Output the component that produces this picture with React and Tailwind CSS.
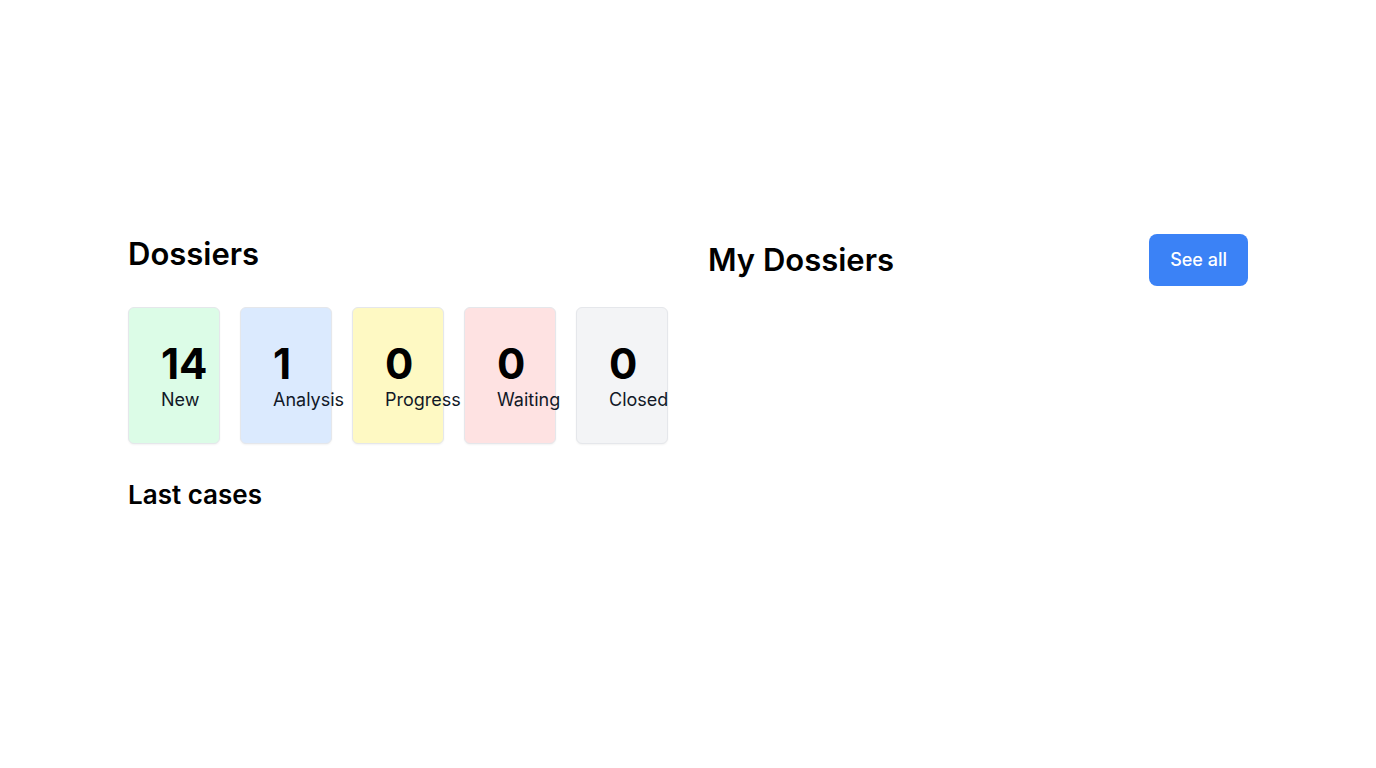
const stats = [
  { count: 14, label: 'New', color: 'bg-[#dcfce7]' },
  { count: 1, label: 'Analysis', color: 'bg-[#dbeafe]' },
  { count: 0, label: 'Progress', color: 'bg-[#fef9c3]' },
  { count: 0, label: 'Waiting', color: 'bg-[#fee2e2]' },
  { count: 0, label: 'Closed', color: 'bg-[#f3f4f6]' },
];

function StatCard({ count, label, color }) {
  return (
    <div className={`flex-1 min-w-0 rounded-md border border-[#e5e7eb] shadow-xs px-8 pt-[35px] pb-[29px] ${color}`}>
      <div className="text-[42px] leading-none font-bold text-black">{count}</div>
      <div className="mt-[1px] text-lg text-[#111827] whitespace-nowrap">{label}</div>
    </div>
  );
}

export default function App() {
  return (
    <div
      className="min-h-screen bg-white text-black"
      style={{ fontFamily: 'Inter, "Noto Sans", sans-serif' }}
    >
      <div className="w-[1120px] mx-auto pt-[234px] grid grid-cols-2 gap-10">
        {/* Dossiers overview */}
        <div>
          <h2 className="text-[31px] leading-10 font-semibold">Dossiers</h2>
          <div className="mt-[33px] flex gap-5">
            {stats.map((s) => (
              <StatCard key={s.label} {...s} />
            ))}
          </div>
          <h3 className="mt-[35px] text-[26px] leading-8 font-semibold">Last cases</h3>
        </div>

        {/* My dossiers */}
        <div>
          <div className="flex items-center justify-between">
            <h2 className="text-[31px] font-semibold">My Dossiers</h2>
            <button className="px-[21px] py-3 rounded-lg bg-[#3b82f6] text-white text-lg font-medium">
              See all
            </button>
          </div>
        </div>
      </div>
    </div>
  );
}
